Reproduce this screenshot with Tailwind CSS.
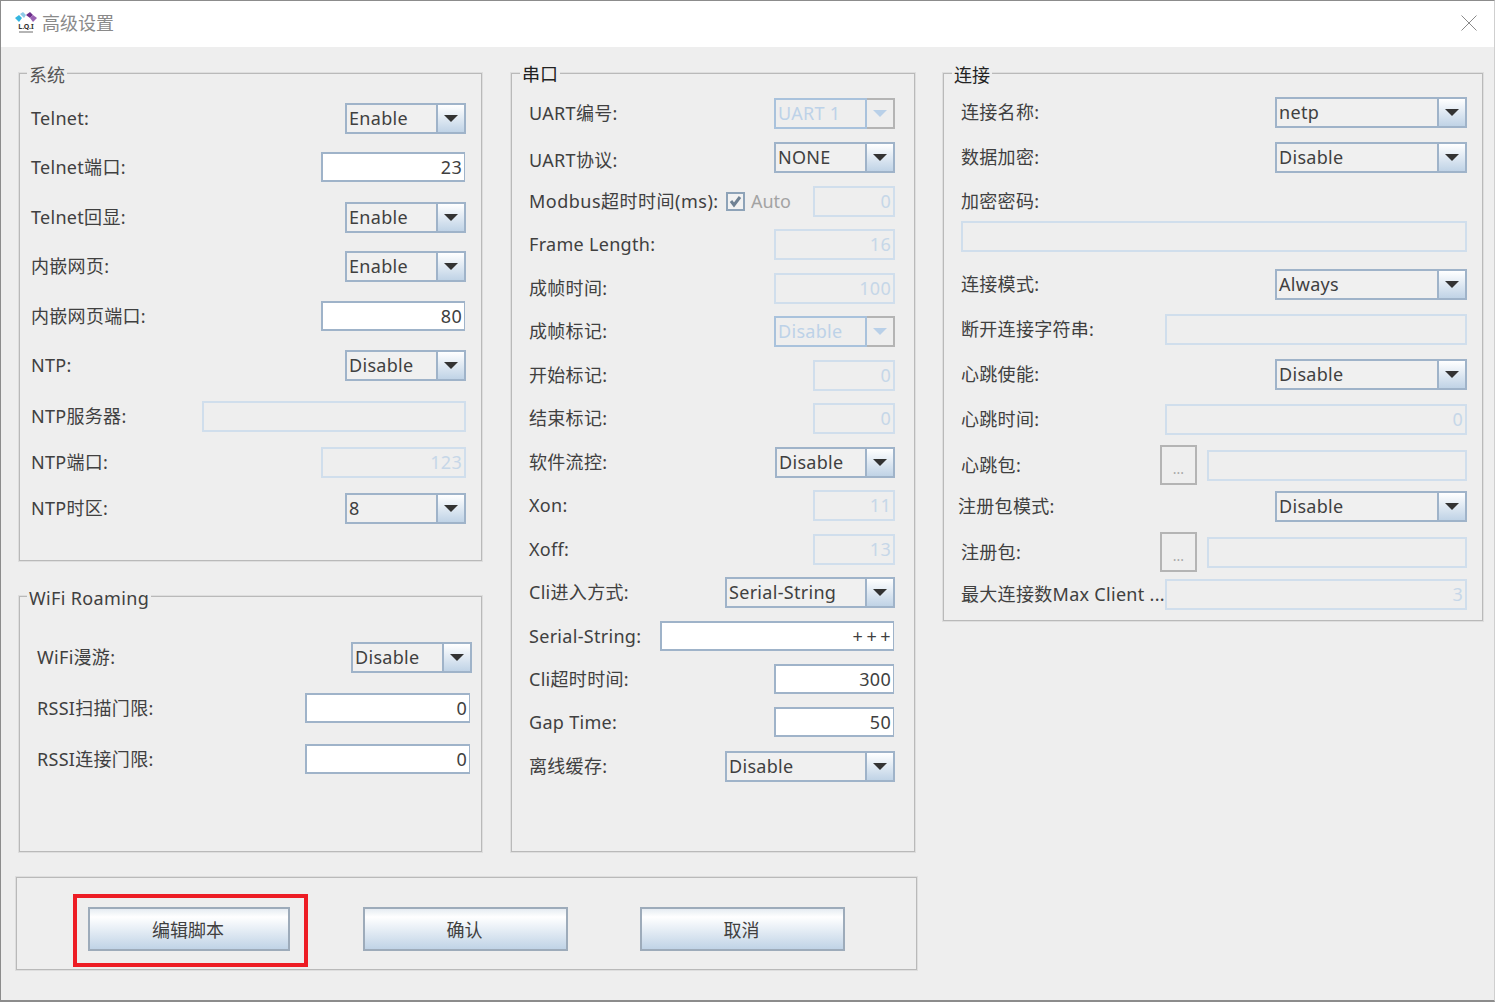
<!DOCTYPE html>
<html lang="zh">
<head>
  <meta charset="UTF-8" />
  <title>高级设置</title>
  <script src="https://cdn.jsdelivr.net/npm/@tailwindcss/browser@4"></script>
</head>
<body class="h-screen overflow-hidden bg-[#eeeeee] font-['Noto_Sans','Noto_Sans_CJK_SC',sans-serif] text-[18px] text-[#404040]">
  <div class="flex h-[1002px] w-[1495px] flex-col border border-b-2 border-[#8c8c8c] border-r-[#cfcfcf]">
    <!-- Title bar -->
    <div class="flex h-[46px] items-center bg-white pb-[2px] pl-[13px] pr-[16px]">
      <svg class="h-[24px] w-[24px]" viewBox="0 0 24 24">
        <path d="M1 7l4-3 3 3-3 4z" fill="#35b6e0" />
        <path d="M6 3l3-2 3 3-2 3z" fill="#8ecbe8" />
        <path d="M12 4l4-3 3 3-3 3z" fill="#6d2f8c" />
        <path d="M16 7l3-3 4 3-4 4z" fill="#9a62b3" />
        <text x="12" y="18" text-anchor="middle" font-size="7" font-weight="700" fill="#333333">L.Q.I</text>
        <rect x="5" y="20" width="14" height="2" fill="#b5b5b5" />
      </svg>
      <span class="ml-[4px] text-[#8a8a8a]">高级设置</span>
      <svg class="ml-auto mr-[1px] h-[16px] w-[16px]" viewBox="0 0 16 16">
        <path d="M0.5 0.5l15 15M15.5 0.5l-15 15" stroke="#8a8a8a" stroke-width="1" fill="none" />
      </svg>
    </div>

    <!-- Panels -->
    <div class="flex pl-[18px] pt-[26px]">
      <div class="flex w-[463px] flex-col">
        <section id="system" class="relative h-[488px] border border-[#b9b9b9] pl-[11px] pr-[15px] shadow-[0_0_0_1px_#dedede]">
          <span class="absolute left-[7px] top-[-10px] bg-[#eeeeee] px-[2px] leading-[22px] text-[#555555]">系统</span>
        </section>
        <section id="wifi" class="relative mt-[35px] h-[256px] border border-[#b9b9b9] pl-[17px] pr-[9px] shadow-[0_0_0_1px_#dedede]">
          <span class="absolute left-[7px] top-[-10px] bg-[#eeeeee] px-[2px] leading-[22px] tracking-[0.35px]">WiFi Roaming</span>
        </section>
      </div>
      <section id="uart" class="relative ml-[29px] h-[779px] w-[404px] border border-[#b9b9b9] pl-[17px] pr-[19px] shadow-[0_0_0_1px_#dedede]">
        <span class="absolute left-[8px] top-[-11px] bg-[#eeeeee] px-[2px] leading-[22px] text-[#222222]">串口</span>
      </section>
      <section id="conn" class="relative ml-[28px] h-[548px] w-[540px] border border-[#b9b9b9] pl-[17px] pr-[15px] shadow-[0_0_0_1px_#dedede]">
        <span class="absolute left-[8px] top-[-10px] bg-[#eeeeee] px-[2px] leading-[22px] text-[#222222]">连接</span>
      </section>
    </div>

    <!-- Bottom buttons -->
    <div class="relative ml-[15px] mt-[25px] flex h-[93px] w-[901px] items-start border border-[#b9b9b9] pl-[71px] pt-[29px] shadow-[0_0_0_1px_#dedede]">
      <button class="h-[44px] w-[202px] border-2 border-[#9dabba] bg-gradient-to-b from-[#e6ecf2] via-[#ffffff] via-20% to-[#c0d3e6] pr-[2px] pt-[2px]">编辑脚本</button>
      <button class="ml-[73px] h-[44px] w-[205px] border-2 border-[#9dabba] bg-gradient-to-b from-[#e6ecf2] via-[#ffffff] via-20% to-[#c0d3e6] pr-[2px] pt-[2px]">确认</button>
      <button class="ml-[72px] h-[44px] w-[205px] border-2 border-[#9dabba] bg-gradient-to-b from-[#e6ecf2] via-[#ffffff] via-20% to-[#c0d3e6] pr-[2px] pt-[2px]">取消</button>
      <div class="absolute left-[56px] top-[16px] h-[73px] w-[235px] border-4 border-[#ed1c24]"></div>
    </div>
  </div>

  <script>
    // Combo box: on = enabled, off = greyed out
    function combo(text, w, on = true) {
      if (on) {
        return `<div class="flex h-[31px] ${w} border-2 border-[#9fb3c9] bg-[#f0f0f0]">
          <span class="flex-1 pl-[2px] leading-[27px] tracking-[0.3px]">${text}</span>
          <span class="flex w-[28px] items-center justify-center border-l-2 border-[#9fb3c9] bg-gradient-to-b from-[#ffffff] to-[#c0d3e6]">
            <svg class="h-[7px] w-[14px]" viewBox="0 0 14 7"><path d="M0 0h14l-7 7z" fill="#333333" /></svg>
          </span>
        </div>`;
      }
      return `<div class="flex h-[31px] ${w}">
        <span class="flex-1 border-2 border-[#a9c2dc] pl-[2px] leading-[27px] tracking-[0.3px] text-[#bdd2e8]">${text}</span>
        <span class="flex w-[28px] items-center justify-center border-2 border-l-0 border-[#b4b4b4]">
          <svg class="h-[7px] w-[14px]" viewBox="0 0 14 7"><path d="M0 0h14l-7 7z" fill="#b9d0e8" /></svg>
        </span>
      </div>`;
    }

    // Text field, enabled ones are white
    function field(value, w, on = false) {
      const look = on
        ? "h-[30px] border-2 border-r border-[#9fb3c9] bg-white pr-[2px] leading-[26px]"
        : "h-[31px] border-2 border-[#d0deec] pr-[2px] leading-[27px] text-[#c6d7e8]";
      return `<div class="${w} ${look} text-right tracking-[0.3px]">${value}</div>`;
    }

    function dots() {
      return `<div class="mr-[10px] flex h-[40px] w-[37px] items-end justify-center border-2 border-[#b4b4b4] pb-[7px] text-[14px] leading-[14px] text-[#a8a8a8]">...</div>`;
    }

    function row(label, control, top) {
      return `<div class="flex h-[30px] items-center ${top}">
        <span class="mr-auto whitespace-nowrap tracking-[0.3px]">${label}</span>${control}
      </div>`;
    }

    function checkAuto() {
      return `<span class="mr-[22px] flex items-center text-[#a3a3a3]">
        <svg class="mr-[6px] h-[19px] w-[19px]" viewBox="0 0 19 19"><rect x="1" y="1" width="17" height="17" fill="#f2f2f2" stroke="#8ea3b8" stroke-width="2" /><path d="M5 9l3 4 6-8" stroke="#6f8193" stroke-width="3" fill="none" /></svg>Auto
      </span>`;
    }

    document.getElementById("system").insertAdjacentHTML("beforeend", [
      row("Telnet:", combo("Enable", "w-[121px]"), "mt-[29px]"),
      row("Telnet端口:", field("23", "w-[144px] mr-[1px]", true), "mt-[19px]"),
      row("Telnet回显:", combo("Enable", "w-[121px]"), "mt-[20px]"),
      row("内嵌网页:", combo("Enable", "w-[121px]"), "mt-[19px]"),
      row("内嵌网页端口:", field("80", "w-[144px] mr-[1px]", true), "mt-[20px]"),
      row("NTP:", combo("Disable", "w-[121px]"), "mt-[19px]"),
      row("NTP服务器:", field("", "w-[264px]"), "mt-[21px]"),
      row("NTP端口:", field("123", "w-[145px]"), "mt-[16px]"),
      row("NTP时区:", combo("8", "w-[121px]"), "mt-[16px]"),
    ].join(""));

    document.getElementById("wifi").insertAdjacentHTML("beforeend", [
      row("WiFi漫游:", combo("Disable", "w-[121px]"), "mt-[45px]"),
      row("RSSI扫描门限:", field("0", "w-[165px] mr-[2px]", true), "mt-[21px]"),
      row("RSSI连接门限:", field("0", "w-[165px] mr-[2px]", true), "mt-[21px]"),
    ].join(""));

    document.getElementById("uart").insertAdjacentHTML("beforeend", [
      row("UART编号:", combo("UART 1", "w-[121px]", false), "mt-[24px]"),
      row("<span class='block translate-y-[3px]'>UART协议:</span>", combo("NONE", "w-[121px]"), "mt-[14px]"),
      row("<span class='tracking-[0.5px]'>Modbus超时时间(ms):</span>", checkAuto() + field("0", "w-[82px]"), "mt-[14px]"),
      row("Frame Length:", field("16", "w-[121px]"), "mt-[13px]"),
      row("成帧时间:", field("100", "w-[121px]"), "mt-[14px]"),
      row("成帧标记:", combo("Disable", "w-[121px]", false), "mt-[13px]"),
      row("开始标记:", field("0", "w-[82px]"), "mt-[14px]"),
      row("结束标记:", field("0", "w-[82px]"), "mt-[13px]"),
      row("软件流控:", combo("Disable", "w-[120px]"), "mt-[14px]"),
      row("Xon:", field("11", "w-[82px]"), "mt-[13px]"),
      row("Xoff:", field("13", "w-[82px]"), "mt-[14px]"),
      row("Cli进入方式:", combo("Serial-String", "w-[170px]"), "mt-[13px]"),
      row("Serial-String:", field("<span class='mr-[-3px] inline-block tracking-[3.5px]'>+++</span>", "w-[234px] mr-[1px]", true), "mt-[14px]"),
      row("Cli超时时间:", field("300", "w-[120px] mr-[1px]", true), "mt-[13px]"),
      row("Gap Time:", field("50", "w-[120px] mr-[1px]", true), "mt-[13px]"),
      row("离线缓存:", combo("Disable", "w-[170px]"), "mt-[14px]"),
    ].join(""));

    document.getElementById("conn").insertAdjacentHTML("beforeend", [
      row("连接名称:", combo("netp", "w-[192px]"), "mt-[23px]"),
      row("数据加密:", combo("Disable", "w-[192px]"), "mt-[15px]"),
      row("加密密码:", "", "mt-[14px]"),
      field("", "w-[506px] mt-[5px]"),
      row("连接模式:", combo("Always", "w-[192px]"), "mt-[17px]"),
      row("断开连接字符串:", field("", "w-[302px]"), "mt-[15px]"),
      row("心跳使能:", combo("Disable", "w-[192px]"), "mt-[15px]"),
      row("心跳时间:", field("0", "w-[302px]"), "mt-[15px]"),
      row("心跳包:", dots() + field("", "w-[260px]"), "mt-[16px]"),
      row("<span class='ml-[-3px]'>注册包模式:</span>", combo("Disable", "w-[192px]"), "mt-[11px]"),
      row("注册包:", dots() + field("", "w-[260px]"), "mt-[16px]"),
      row("最大连接数Max Client ...", field("3", "w-[302px]"), "mt-[12px]"),
    ].join(""));
  </script>
</body>
</html>
